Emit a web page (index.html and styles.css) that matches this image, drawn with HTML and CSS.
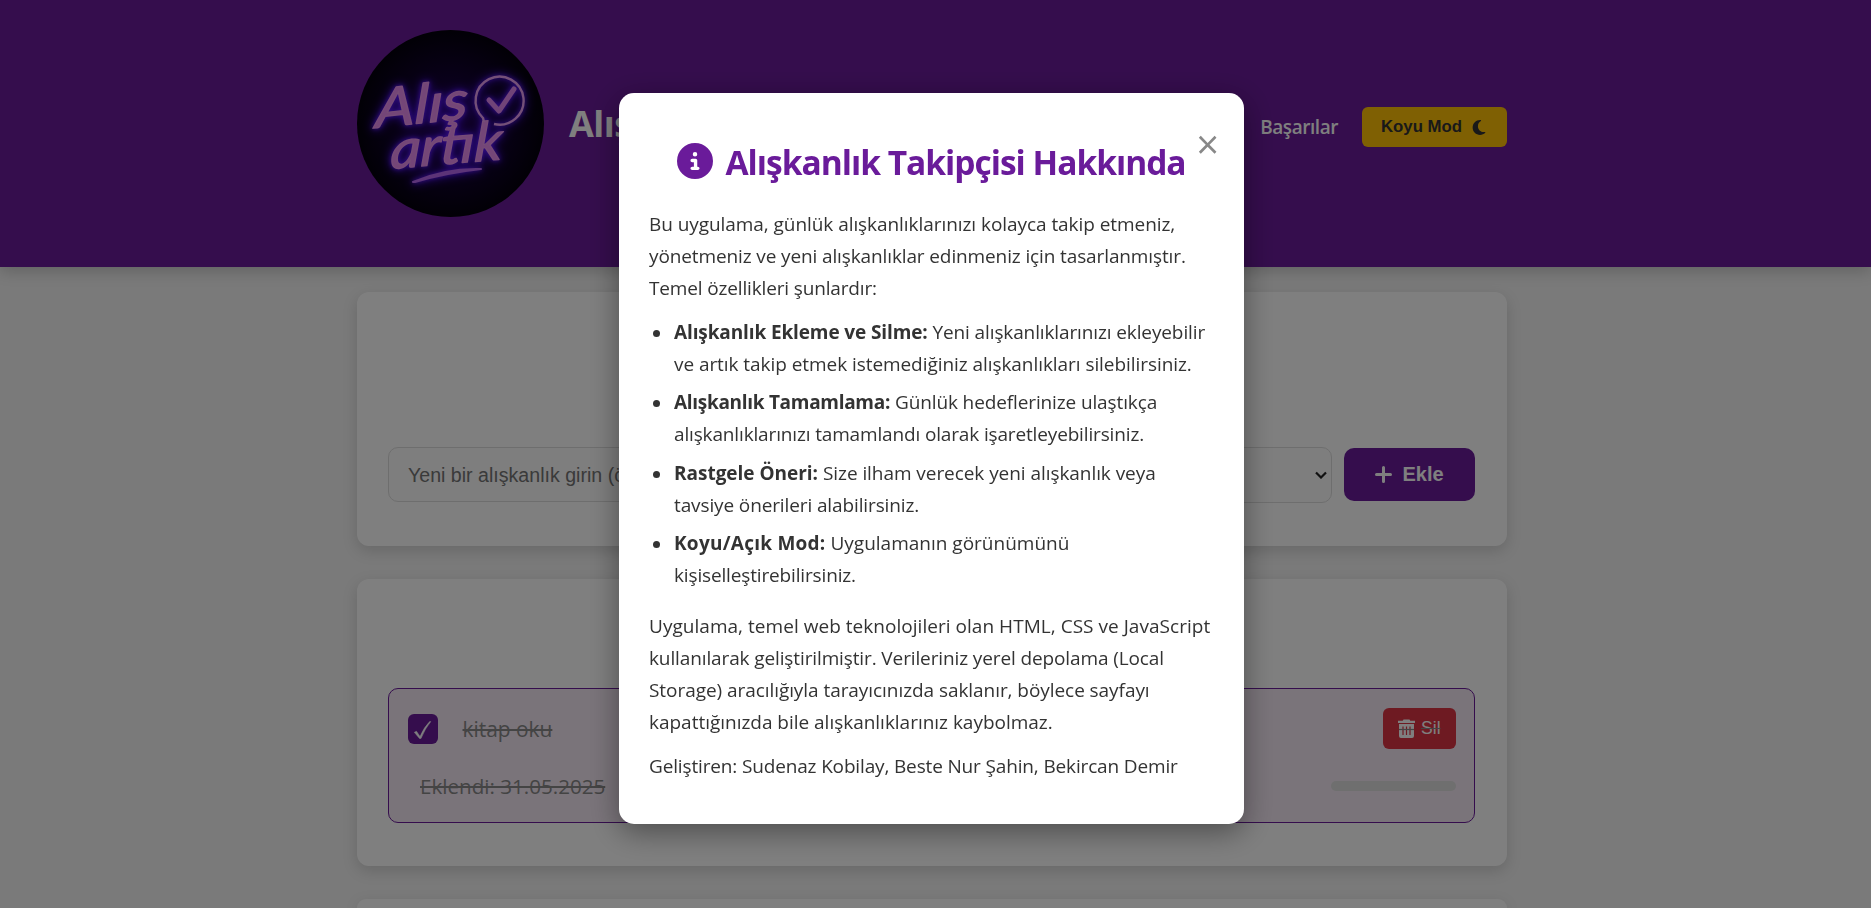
FILE: index.html
```html
<!DOCTYPE html>
<html lang="tr">
<head>
<meta charset="utf-8">
<title>Alışkanlık Takipçisi</title>
<link rel="stylesheet" href="styles.css">
</head>
<body>
<header class="site-header">
  <div class="container header-row">
    <svg class="logo" viewBox="0 0 187 187" role="img">
      <defs>
        <radialGradient id="night"><stop offset="0" stop-color="#22005a"/><stop offset=".55" stop-color="#10002e"/><stop offset="1" stop-color="#04000c"/></radialGradient>
      </defs>
      <circle cx="93.500" cy="93.500" r="93.500" fill="url(#night)"/>
      <g class="neon">
        <g transform="translate(18 98) rotate(-6) skewX(-8)"><text class="logo-text" textLength="93" lengthAdjust="spacingAndGlyphs">Alış</text></g>
        <g transform="translate(33 139) rotate(-5) skewX(-8)"><text class="logo-text" textLength="112" lengthAdjust="spacingAndGlyphs">artık</text></g>
        <path class="tube" d="M127 92 L126 88 A24 24 0 1 1 137 94"/>
        <path class="check" d="M132 70 L142 81 L157 59"/>
        <path class="swash" d="M56 152 Q88 138 124 139 Q88 143 58 152 Z"/>
      </g>
    </svg>
    <h1 class="site-title">Alışkanlık Takipçisi</h1>
    <nav class="nav">
      <a class="nav-link">Başarılar</a>
      <button class="mode-btn">Koyu Mod
        <svg class="moon" viewBox="0 0 384 512"><path d="M223.500 32C100 32 0 132.300 0 256S100 480 223.500 480c60.600 0 115.500-24.200 155.800-63.400c5-4.900 6.300-12.500 3.100-18.700s-10.100-9.700-17-8.500c-9.800 1.700-19.800 2.600-30.100 2.600c-96.900 0-175.500-78.800-175.500-176c0-65.800 36-123.100 89.300-153.300c6.100-3.500 9.200-10.500 7.700-17.300s-7.300-11.900-14.300-12.500c-6.300-.5-12.600-.8-19-.8z"/></svg>
      </button>
    </nav>
  </div>
</header>
<main class="container cards">
  <section class="card add-card">
    <div class="add-row">
      <div class="field">Yeni bir alışkanlık girin (ö</div>
      <div class="field select"><svg class="chevron" viewBox="0 0 12 8"><path d="M1 1.500 L6 6.500 L11 1.500"/></svg></div>
      <button class="add-btn"><svg class="plus" viewBox="0 0 17 17"><path d="M8.500 1.500V15.500M1.500 8.500H15.500"/></svg>Ekle</button>
    </div>
  </section>
  <section class="card list-card">
    <div class="habit">
      <div class="habit-row">
        <span class="box"><svg viewBox="0 0 30 30"><path d="M6.300 18.300 L8.500 17.300 L12 22.500 Q16 13 22 7.200 L22.700 7.700 Q17 14.500 13 24.500 L11.500 24.500 Z"/></svg></span>
        <span class="habit-name">kitap oku</span>
        <button class="del-btn">
          <svg class="trash" viewBox="0 0 17 19"><path d="M5.500 .5h6l.8 1.200H17V4H0V1.700h4.700zM1 5h15v12q0 2-2 2H3q-2 0-2-2z"/><path class="ribs" d="M5 7.500v8.500M8.500 7.500v8.500M12 7.500v8.500"/><path class="cross" d="M1 10.500h15"/></svg><span class="del-text">Sil</span>
        </button>
      </div>
      <div class="habit-row meta-row">
        <span class="habit-date">Eklendi: 31.05.2025</span>
        <span class="progress"></span>
      </div>
    </div>
  </section>
  <section class="card tail-card"></section>
</main>
<div class="overlay">
  <div class="modal">
    <span class="close">×</span>
    <h2 class="modal-title">
      <svg class="info" viewBox="0 0 512 512"><path d="M256 512A256 256 0 1 0 256 0a256 256 0 1 0 0 512zM216 336h24V272H216c-13.300 0-24-10.700-24-24s10.700-24 24-24h48c13.300 0 24 10.700 24 24v88h8c13.300 0 24 10.700 24 24s-10.700 24-24 24H216c-13.300 0-24-10.700-24-24s10.700-24 24-24zm40-208a32 32 0 1 1 0 64 32 32 0 1 1 0-64z"/></svg>
      <span>Alışkanlık Takipçisi Hakkında</span>
    </h2>
    <p class="intro"><span class="t2">Bu uygulama, günlük alışkanlıklarınızı kolayca takip etmeniz,</span><br><span class="t3">yönetmeniz ve yeni alışkanlıklar edinmeniz için tasarlanmıştır.</span><br><span class="t4">Temel özellikleri şunlardır:</span></p>
    <ul class="features">
      <li><b class="t3">Alışkanlık Ekleme ve Silme:</b> <span class="t3">Yeni alışkanlıklarınızı ekleyebilir</span><br><span class="t2">ve artık takip etmek istemediğiniz alışkanlıkları silebilirsiniz.</span></li>
      <li><b class="t5">Alışkanlık Tamamlama:</b> <span class="t3">Günlük hedeflerinize ulaştıkça</span><br><span class="t4">alışkanlıklarınızı tamamlandı olarak işaretleyebilirsiniz.</span></li>
      <li><b class="t1">Rastgele Öneri:</b> <span class="t2">Size ilham verecek yeni alışkanlık veya</span><br><span class="t3">tavsiye önerileri alabilirsiniz.</span></li>
      <li><b class="w2">Koyu/Açık Mod:</b> <span>Uygulamanın görünümünü</span><br><span class="t4">kişiselleştirebilirsiniz.</span></li>
    </ul>
    <p class="about"><span class="w1">Uygulama, temel web teknolojileri olan HTML, CSS ve JavaScript</span><br><span class="t3">kullanılarak geliştirilmiştir. Verileriniz yerel depolama (Local</span><br><span class="t2">Storage) aracılığıyla tarayıcınızda saklanır, böylece sayfayı</span><br><span class="t1">kapattığınızda bile alışkanlıklarınız kaybolmaz.</span></p>
    <p class="credits t4">Geliştiren: Sudenaz Kobilay, Beste Nur Şahin, Bekircan Demir</p>
  </div>
</div>
</body>
</html>
```
FILE: styles.css
```css
* { box-sizing: border-box; }
html, body { height: 100%; overflow: hidden; }
body {
  display: flex;
  flex-direction: column;
  margin: 0;
  background: #f4f4f4;
  color: #333;
  font-family: "Open Sans", "Noto Sans", sans-serif;
}
h1, h2, p, ul { margin: 0; padding: 0; }
button { border: 0; font-family: "Liberation Sans", Arial, sans-serif; }
.container { width: 1150px; margin-left: 357px; }

/* Header */
.site-header {
  flex: none;
  height: 267px;
  padding-top: 30px;
  background: #6a1b9a;
  box-shadow: 0 4px 15px rgba(0, 0, 0, .2);
}
.header-row { display: flex; align-items: flex-start; }
.logo { width: 187px; height: 187px; flex: none; }
.neon { filter: drop-shadow(0 0 2px #6a1cff) drop-shadow(0 0 5px #5010ff); }
.logo-text {
  font: italic 400 54px Lato, sans-serif;
  fill: #e88cf0;
  stroke: #ec98ee;
  stroke-width: 1.300;
  stroke-linejoin: round;
}
.tube { fill: none; stroke: #e8a0f0; stroke-width: 2.4; }
.check { fill: none; stroke: #e088f0; stroke-width: 5; stroke-linecap: round; stroke-linejoin: round; }
.swash { fill: #b868f0; stroke: #b868f0; stroke-width: 2; stroke-linejoin: round; }
.site-title {
  margin: 68px 0 0 25px;
  color: #fff;
  font-size: 36px;
  line-height: 52px;
  letter-spacing: -.5px;
  white-space: nowrap;
}
.nav { display: flex; align-items: center; gap: 24px; margin: 77px 0 0 auto; }
.nav-link { color: #fff; font-size: 19px; font-weight: 600; letter-spacing: -.45px; line-height: 40px; }
.mode-btn {
  display: flex;
  align-items: center;
  gap: 10px;
  width: 145px;
  height: 40px;
  padding: 0 0 0 19px;
  border-radius: 6px;
  background: #ffc107;
  color: #333;
  font-size: 16.800px;
  font-weight: 700;
  white-space: nowrap;
}
.moon { width: 14px; height: 17px; fill: #333; }

/* Cards */
.cards { display: flex; flex: 1; flex-direction: column; gap: 33px; min-height: 0; padding-top: 25px; }
.card {
  flex: none;
  border-radius: 12px;
  background: #fff;
  box-shadow: 0 5px 15px rgba(0, 0, 0, .15);
}
.add-card { height: 254px; padding: 155px 32px 0 31px; }
.list-card { height: 287px; padding: 109px 32px 0 31px; }
.tail-card { flex: 1; min-height: 0; border-radius: 12px 12px 0 0; }
.add-row { display: flex; align-items: flex-start; }
.field {
  width: 640px;
  height: 55px;
  padding-left: 19px;
  border: 1px solid #ddd;
  border-radius: 10px;
  background: #fcfcfc;
  color: #757575;
  font: 19.600px/54px "Liberation Sans", Arial, sans-serif;
  white-space: nowrap;
}
.select {
  display: flex;
  align-items: center;
  justify-content: flex-end;
  width: 292px;
  height: 56px;
  margin: 0 12px;
  padding-right: 4px;
}
.chevron { width: 12px; height: 8px; fill: none; stroke: #222; stroke-width: 2.200; }
.add-btn {
  display: flex;
  align-items: center;
  justify-content: center;
  gap: 10px;
  width: 131px;
  height: 53px;
  margin-top: 1px;
  padding: 0;
  border-radius: 10px;
  background: #6a1b9a;
  color: #fff;
  font-size: 20px;
  font-weight: 700;
}
.plus { width: 17px; height: 17px; fill: none; stroke: #fff; stroke-width: 3; stroke-linecap: round; }

/* Habit item */
.habit {
  height: 135px;
  padding: 19px 18px 0 19px;
  border: 1px solid #6a1b9a;
  border-radius: 10px;
  background: #f5e9f5;
}
.habit-row { display: flex; align-items: center; height: 41px; color: #888; font-size: 20.900px; }
.box { width: 30px; height: 30px; border-radius: 6px; background: #6a1b9a; }
.box svg { display: block; fill: #fff; stroke: #fff; stroke-width: .5; }
.habit-name { margin-left: 24.500px; text-decoration: line-through 2px; }
.del-btn {
  display: flex;
  align-items: center;
  gap: 6px;
  width: 73px;
  height: 41px;
  margin-left: auto;
  padding: 0 0 0 15px;
  border-radius: 6px;
  background: #dc3545;
  color: #fff;
  font-size: 17.600px;
}
.trash { width: 17px; height: 19px; fill: #fff; }
.ribs { stroke: #dc3545; stroke-width: 1.200; }
.cross { stroke: #888; stroke-width: 1.200; }
.del-text { margin-top: -1px; text-decoration: line-through 1px #888; }
.meta-row { margin-top: 16px; padding-left: 12px; font-size: 20.600px; }
.habit-date { text-decoration: line-through 2px; }
.progress { width: 125px; height: 10px; margin-left: auto; border-radius: 5px; background: #dedede; }

/* Modal */
.overlay {
  position: fixed;
  inset: 0;
  display: flex;
  align-items: flex-start;
  justify-content: center;
  padding: 93px 8px 0 0;
  background: rgba(0, 0, 0, .5);
}
.modal {
  position: relative;
  width: 625px;
  height: 731px;
  padding: 42px 30px 0;
  border-radius: 15px;
  background: #fff;
  box-shadow: 0 8px 30px rgba(0, 0, 0, .4);
  font-size: 19px;
  line-height: 32px;
  white-space: nowrap;
}
.close {
  position: absolute;
  top: 31px;
  right: 25px;
  color: #888;
  font-size: 40px;
  line-height: 40px;
}
.modal-title {
  display: flex;
  align-items: center;
  justify-content: flex-start;
  gap: 12.500px;
  height: 56px;
  padding-left: 28px;
  color: #6a1b9a;
  font-size: 33.500px;
  line-height: 54px;
  letter-spacing: -1px;
}
.info { width: 36px; height: 36px; margin-bottom: 4px; fill: #6a1b9a; }
.modal-title span { margin-bottom: 2px; }
.intro { margin-top: 17px; }
.features { margin-top: 12px; list-style: none; }
.features li { position: relative; margin-bottom: 6.400px; padding-left: 25px; }
.features li::before {
  content: "";
  position: absolute;
  top: 14px;
  left: 4px;
  width: 7px;
  height: 7px;
  border-radius: 50%;
  background: #333;
}
.about { margin-top: 19px; }
.credits { margin-top: 12px; }

/* Tracking steps: t tightens, w widens */
.t1 { letter-spacing: -.02px; }
.t2 { letter-spacing: -.06px; }
.t3 { letter-spacing: -.12px; }
.t4 { letter-spacing: -.15px; }
.t5 { letter-spacing: -.3px; }
.w1 { letter-spacing: .035px; }
.w2 { letter-spacing: .25px; }
```
